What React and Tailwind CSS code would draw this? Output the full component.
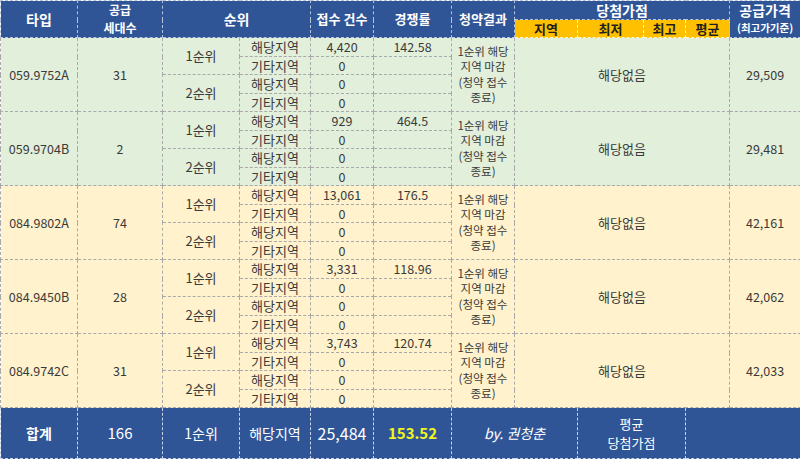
import React from "react";

const groups = [
  { type: "059.9752A", n: "31", r1: "4,420", rate: "142.58", price: "29,509", bg: "bg-[#e2efda]" },
  { type: "059.9704B", n: "2", r1: "929", rate: "464.5", price: "29,481", bg: "bg-[#e2efda]" },
  { type: "084.9802A", n: "74", r1: "13,061", rate: "176.5", price: "42,161", bg: "bg-[#fff2cc]" },
  { type: "084.9450B", n: "28", r1: "3,331", rate: "118.96", price: "42,062", bg: "bg-[#fff2cc]" },
  { type: "084.9742C", n: "31", r1: "3,743", rate: "120.74", price: "42,033", bg: "bg-[#fff2cc]" },
];

const widths = [77, 85, 77, 71, 63, 78, 63, 63, 66, 42, 44, 71];

const H = "border border-dashed border-[#b8c4dc] bg-[#2f5597] text-white font-bold p-0 text-center align-middle";
const Y = "border border-dashed border-[#fff6d0] bg-[#ffc000] text-[#1f1f1f] font-bold p-0 text-center align-middle text-[13px] leading-[16px]";
const D = "border border-dashed border-[#a9a9a9] p-0 text-center align-middle";
const F = "border border-dashed border-[#c8d2e8] bg-[#2f5597] p-0 text-center align-middle";

function Group({ g }) {
  const c = D;
  const k = `${D} text-[13px]`;
  return (
    <>
      <tr className={`h-[19px] ${g.bg}`}>
        <td rowSpan={4} className={c}>{g.type}</td>
        <td rowSpan={4} className={c}>{g.n}</td>
        <td rowSpan={2} className={k}>1순위</td>
        <td className={k}>해당지역</td>
        <td className={c}>{g.r1}</td>
        <td className={c}>{g.rate}</td>
        <td rowSpan={4} className={`${c} text-[11.5px] leading-[15.5px] whitespace-nowrap`}>
          1순위 해당<br />지역 마감<br />(청약 접수<br />종료)
        </td>
        <td rowSpan={4} colSpan={4} className={k}>해당없음</td>
        <td rowSpan={4} className={c}>{g.price}</td>
      </tr>
      <tr className={`h-[18px] ${g.bg}`}>
        <td className={k}>기타지역</td>
        <td className={c}>0</td>
        <td className={c}></td>
      </tr>
      <tr className={`h-[19px] ${g.bg}`}>
        <td rowSpan={2} className={k}>2순위</td>
        <td className={k}>해당지역</td>
        <td className={c}>0</td>
        <td className={c}></td>
      </tr>
      <tr className={`h-[18px] ${g.bg}`}>
        <td className={k}>기타지역</td>
        <td className={c}>0</td>
        <td className={c}></td>
      </tr>
    </>
  );
}

export default function App() {
  return (
    <div
      className="w-[800px] h-[459px] overflow-hidden bg-white text-[#3a3a3a] text-[12.5px] leading-[16px]"
      style={{ fontFamily: '"Noto Sans CJK KR", "Noto Sans", sans-serif' }}
    >
      <table className="w-[800px] table-fixed border-collapse">
        <colgroup>
          {widths.map((w, i) => (
            <col key={i} style={{ width: w }} />
          ))}
        </colgroup>
        <thead>
          <tr className="h-[19px]">
            <th rowSpan={2} className={`${H} text-[14px]`}>타입</th>
            <th rowSpan={2} className={`${H} text-[12px] leading-[18px]`}>공급<br />세대수</th>
            <th rowSpan={2} colSpan={2} className={`${H} text-[14px]`}>순위</th>
            <th rowSpan={2} className={`${H} text-[13px]`}>접수 건수</th>
            <th rowSpan={2} className={`${H} text-[13px]`}>경쟁률</th>
            <th rowSpan={2} className={`${H} text-[13px]`}>청약결과</th>
            <th colSpan={4} className={`${H} text-[14px] leading-[17px]`}>당첨가점</th>
            <th rowSpan={2} className={`${H} text-[14px] leading-[16px]`}>
              공급가격<br /><span className="text-[10.5px]">(최고가기준)</span>
            </th>
          </tr>
          <tr className="h-[18px]">
            <th className={Y}>지역</th>
            <th className={Y}>최저</th>
            <th className={Y}>최고</th>
            <th className={Y}>평균</th>
          </tr>
        </thead>
        <tbody>
          {groups.map((g) => (
            <Group key={g.type} g={g} />
          ))}
          <tr className="h-[51px]">
            <td className={`${F} text-white text-[14px] font-semibold`}>합계</td>
            <td className={`${F} text-white text-[15px]`}>166</td>
            <td className={`${F} text-white text-[14px]`}>1순위</td>
            <td className={`${F} text-white text-[14px]`}>해당지역</td>
            <td className={`${F} text-white text-[16px]`}>25,484</td>
            <td className={`${F} text-[#f2f51a] text-[15px] font-bold`}>153.52</td>
            <td colSpan={2} className={`${F} text-white text-[14px] italic`}>by. 권청춘</td>
            <td colSpan={2} className={`${F} text-white text-[13px] leading-[19px]`}>평균<br />당첨가점</td>
            <td colSpan={2} className={F}></td>
          </tr>
        </tbody>
      </table>
    </div>
  );
}
